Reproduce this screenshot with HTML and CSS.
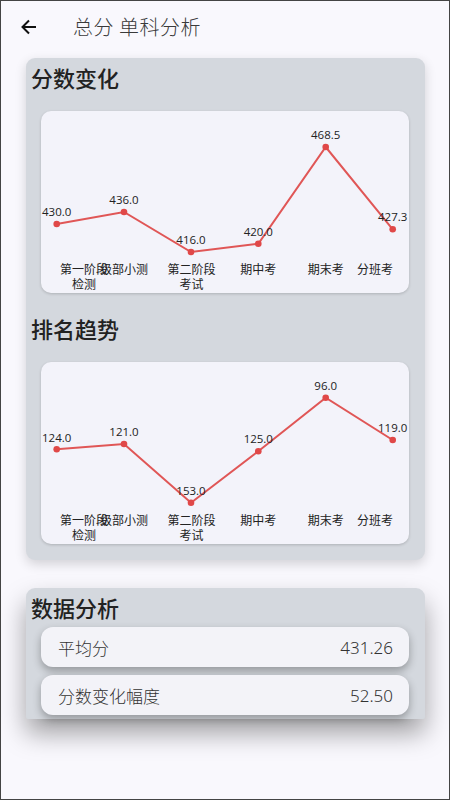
FILE: index.html
```html
<!DOCTYPE html>
<html lang="zh">
<head>
<meta charset="utf-8">
<link rel="stylesheet" href="styles.css">
</head>
<body>
<div class="screen">
  <header class="topbar">
    <svg class="back" width="20" height="20" viewBox="0 0 20 20"><path d="M17 10H4M10 3.5L3.5 10 10 16.5" fill="none" stroke="#111" stroke-width="2"/></svg>
    <div class="title">总分 单科分析</div>
  </header>

  <section class="card card-charts">
    <h2 class="card-title">分数变化</h2>
    <div class="chart">
      <svg width="368" height="182" viewBox="0 0 368 182">
        <polyline class="line" points="15.7,113 83,101 150,141 217.3,132.7 284.7,36 351.7,118.3"/>
        <circle class="pt" cx="15.7" cy="113" r="3.3"/>
        <circle class="pt" cx="83" cy="101" r="3.3"/>
        <circle class="pt" cx="150" cy="141" r="3.3"/>
        <circle class="pt" cx="217.3" cy="132.7" r="3.3"/>
        <circle class="pt" cx="284.7" cy="36" r="3.3"/>
        <circle class="pt" cx="351.7" cy="118.3" r="3.3"/>
        <text class="val" x="15.7" y="105">430.0</text>
        <text class="val" x="83" y="93">436.0</text>
        <text class="val" x="150" y="133">416.0</text>
        <text class="val" x="217.3" y="124.5">420.0</text>
        <text class="val" x="284.7" y="28">468.5</text>
        <text class="val" x="351.7" y="110">427.3</text>
        <text class="xl" x="43" y="163">第一阶段</text>
        <text class="xl" x="43" y="178">检测</text>
        <text class="xl" x="83" y="163">级部小测</text>
        <text class="xl" x="150.5" y="163">第二阶段</text>
        <text class="xl" x="150.5" y="178">考试</text>
        <text class="xl" x="217.3" y="163">期中考</text>
        <text class="xl" x="284.7" y="163">期末考</text>
        <text class="xl end" x="352" y="163">分班考</text>
      </svg>
    </div>
    <h2 class="card-title second">排名趋势</h2>
    <div class="chart">
      <svg width="368" height="182" viewBox="0 0 368 182">
        <polyline class="line" points="15.7,87.3 83,82 150,140.7 217.3,89.3 284.7,35.7 351.7,78"/>
        <circle class="pt" cx="15.7" cy="87.3" r="3.3"/>
        <circle class="pt" cx="83" cy="82" r="3.3"/>
        <circle class="pt" cx="150" cy="140.7" r="3.3"/>
        <circle class="pt" cx="217.3" cy="89.3" r="3.3"/>
        <circle class="pt" cx="284.7" cy="35.7" r="3.3"/>
        <circle class="pt" cx="351.7" cy="78" r="3.3"/>
        <text class="val" x="15.7" y="79.5">124.0</text>
        <text class="val" x="83" y="74">121.0</text>
        <text class="val" x="150" y="132.7">153.0</text>
        <text class="val" x="217.3" y="81">125.0</text>
        <text class="val" x="284.7" y="27.5">96.0</text>
        <text class="val" x="351.7" y="70">119.0</text>
        <text class="xl" x="43" y="163">第一阶段</text>
        <text class="xl" x="43" y="178">检测</text>
        <text class="xl" x="83" y="163">级部小测</text>
        <text class="xl" x="150.5" y="163">第二阶段</text>
        <text class="xl" x="150.5" y="178">考试</text>
        <text class="xl" x="217.3" y="163">期中考</text>
        <text class="xl" x="284.7" y="163">期末考</text>
        <text class="xl end" x="352" y="163">分班考</text>
      </svg>
    </div>
  </section>

  <section class="card card-data">
    <h2 class="card-title">数据分析</h2>
    <div class="row"><span>平均分</span><span>431.26</span></div>
    <div class="row"><span>分数变化幅度</span><span>52.50</span></div>
  </section>
</div>
</body>
</html>
```

FILE: styles.css
```css
html, body {
  margin: 0;
  padding: 0;
}
body {
  background: #f9f8fd;
  font-family: "Noto Sans", "Noto Sans CJK SC", sans-serif;
  color: #222;
}
.screen {
  box-sizing: border-box;
  width: 450px;
  height: 800px;
  border: 1px solid #444;
  background: #f9f8fd;
  overflow: hidden;
  padding: 0 24px 0 25px;
}
.topbar {
  height: 57px;
  display: flex;
  align-items: center;
  padding-bottom: 6px;
  box-sizing: border-box;
  margin-left: -25px;
}
.back {
  margin-left: 18px;
  flex: none;
}
.title {
  margin-left: 34px;
  font-family: "Noto Sans CJK SC", sans-serif;
  font-size: 20px;
  font-weight: 300;
  color: #3a3a3a;
  letter-spacing: 0.5px;
}
.card {
  background: #d4d8de;
  border-radius: 9px;
}
.card-charts {
  padding: 4px 16px 16px 15px;
  box-shadow: 0 4px 12px rgba(0, 0, 0, 0.16);
}
.card-title {
  margin: 0 0 0 -10px;
  font-family: "Noto Sans CJK SC", sans-serif;
  font-size: 22px;
  line-height: 30px;
  font-weight: 500;
  color: #222;
}
.card-title.second {
  margin-top: 20px;
}
.chart {
  margin-top: 19px;
  height: 182px;
  background: #f3f3fa;
  border-radius: 10px;
  box-shadow: 0 1px 3px rgba(0, 0, 0, 0.18);
}
.chart svg {
  display: block;
}
.line {
  fill: none;
  stroke: #e05656;
  stroke-width: 2;
}
.pt {
  fill: #e04848;
}
.val {
  font-family: "Open Sans", "Noto Sans", sans-serif;
  font-size: 11.5px;
  fill: #222;
  text-anchor: middle;
}
.xl {
  font-family: "Noto Sans CJK SC", sans-serif;
  font-size: 12px;
  fill: #222;
  text-anchor: middle;
}
.xl.end {
  text-anchor: end;
}
.card-data {
  margin-top: 28px;
  padding: 4px 16px 4px 15px;
  border-radius: 9px 9px 2px 2px;
  box-shadow: 0 14px 26px rgba(0, 0, 0, 0.36);
}
.card-data .card-title {
  margin-bottom: 5px;
}
.row {
  height: 40px;
  box-sizing: border-box;
  display: flex;
  justify-content: space-between;
  align-items: center;
  padding: 0 16px 0 17px;
  background: #f3f3f8;
  border-radius: 12px;
  box-shadow: 0 4px 8px rgba(0, 0, 0, 0.3);
  font-family: "Noto Sans", "Noto Sans CJK SC", sans-serif;
  font-size: 17px;
  font-weight: 300;
  color: #333;
}
.row + .row {
  margin-top: 8px;
}
```
